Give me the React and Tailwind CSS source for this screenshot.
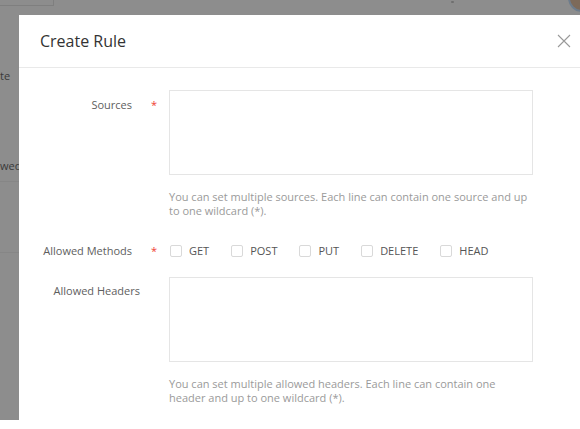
import React from 'react';

const font = { fontFamily: '"Open Sans", "Noto Sans", sans-serif' };

const Checkbox = ({ label }) => (
  <label className="flex items-center gap-[7px] text-[11px] text-[#555]">
    <span className="w-[12px] h-[12px] border border-[#d9d9d9] rounded-[2px] bg-white" />
    {label}
  </label>
);

const FieldLabel = ({ children, required }) => (
  <div className="flex shrink-0">
    <div className={`w-[121px] text-right text-[11px] leading-[14px] text-[#5e5e5e] ${required ? 'pr-[8px]' : ''}`}>
      {children}
    </div>
    <div className="w-[29px] pl-[11px] text-[11px] leading-[14px] text-[#f04134]">{required ? '*' : ''}</div>
  </div>
);

const Help = ({ children }) => (
  <p className="mt-[15px] w-[364px] text-[11px] leading-[14px] text-[#9a9a9a]">{children}</p>
);

export default function App() {
  return (
    <div className="relative w-[580px] h-[429px] overflow-hidden bg-[#8d8d8d]" style={font}>
      {/* page behind the overlay */}
      <div className="h-[420px] flex flex-col">
        <div className="flex items-start justify-between">
          <div className="w-[54px] h-[6px] border-r border-b border-[#7f7f7f]" />
          <div className="flex items-start gap-[114px]">
            <span className="mt-[1px] w-[3px] h-[2px] rounded-full bg-[#6f6f6f]" />
            <span className="-mt-[16px] -mr-[16px] w-[28px] h-[28px] rounded-full bg-[#7d6a5a] border-2 border-[#6d7c8c]" />
          </div>
        </div>
        <div className="mt-[57px] text-[11px] leading-[14px] text-[#3a3a3a]">te</div>
        <div className="mt-[76px] text-[11px] leading-[14px] text-[#3a3a3a]">wed</div>
        <div className="mt-[8px] h-px bg-[#868686]" />
        <div className="mt-[70px] h-px bg-[#868686]" />
      </div>
      <div className="h-[9px] bg-white" />

      {/* modal */}
      <div className="absolute left-[19px] top-[15px] w-[600px] h-[405px] bg-white">
        <div className="h-[53px] border-b border-[#e9e9e9] flex items-center justify-between pl-[21px] pr-[48px]">
          <h2 className="text-[16px] text-[#333] leading-[20px]">Create Rule</h2>
          <svg width="14" height="14" viewBox="0 0 14 14" className="text-[#999]">
            <path d="M1 1 L13 13 M13 1 L1 13" stroke="currentColor" strokeWidth="1.1" fill="none" />
          </svg>
        </div>

        <div className="pt-[22px]">
          <div className="flex">
            <div className="pt-[8px]"><FieldLabel required>Sources</FieldLabel></div>
            <div>
              <div className="w-[364px] h-[85px] border border-[#e5e5e5]" />
              <Help>You can set multiple sources. Each line can contain one source and up to one wildcard (*).</Help>
            </div>
          </div>

          <div className="flex items-center mt-[25px]">
            <FieldLabel required>Allowed Methods</FieldLabel>
            <div className="flex items-center gap-[22px] pl-px">
              <Checkbox label="GET" />
              <Checkbox label="POST" />
              <Checkbox label="PUT" />
              <Checkbox label="DELETE" />
              <Checkbox label="HEAD" />
            </div>
          </div>

          <div className="flex mt-[17px]">
            <div className="pt-[7px]"><FieldLabel>Allowed Headers</FieldLabel></div>
            <div>
              <div className="w-[364px] h-[85px] border border-[#e5e5e5]" />
              <Help>You can set multiple allowed headers. Each line can contain one header and up to one wildcard (*).</Help>
            </div>
          </div>
        </div>
      </div>
    </div>
  );
}
